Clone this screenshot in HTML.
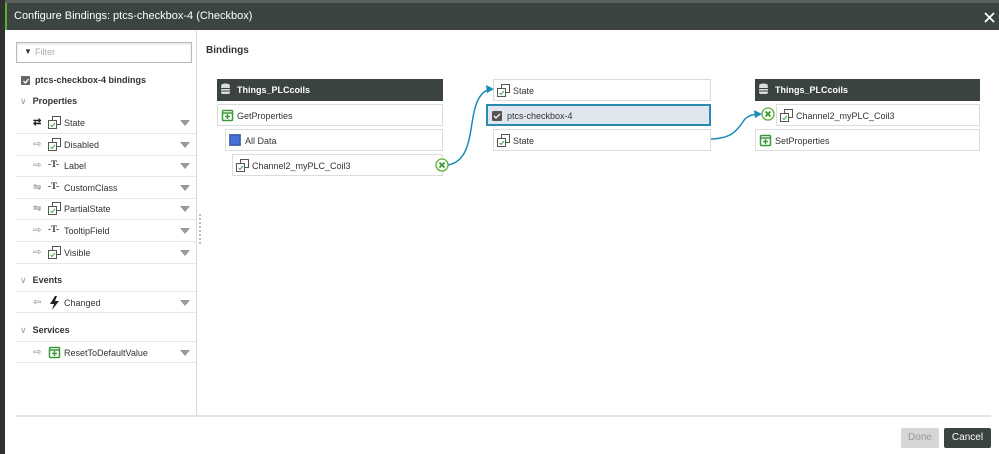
<!DOCTYPE html>
<html><head><meta charset="utf-8"><style>
*{box-sizing:border-box;margin:0;padding:0}
body{width:999px;height:454px;overflow:hidden;background:#fff;font-family:"Liberation Sans",Arial,sans-serif;font-size:9px;color:#333;position:relative}
.a{position:absolute}
.row{position:absolute;left:16px;width:180px;height:22px;border-bottom:1px solid #e6e6e6}
.row .t{position:absolute;left:48px;top:6px;font-size:9px;color:#333}
.row .arr{position:absolute;left:17px;top:5px;color:#888;font-size:10px}
.row .ic{position:absolute;left:32px;top:4px}
.row .dd{position:absolute;right:6px;top:8px;width:0;height:0;border-left:5px solid transparent;border-right:5px solid transparent;border-top:6px solid #999}
.sec{position:absolute;left:20px;font-size:9px;font-weight:bold;color:#333}
.sec span{color:#999;font-weight:normal;margin-right:6px}
.box{position:absolute;height:22px;border:1px solid #dcdcdc;background:#fff;font-size:9px;color:#333;padding:6px 0 0 19px;white-space:nowrap}
.hd{position:absolute;height:22px;background:#3b4342;color:#fff;font-weight:bold;font-size:9px;padding:6px 0 0 20px}
.box svg,.hd svg{position:absolute;left:3px;top:4px}
</style></head><body>
<div class="a" style="left:0;top:0;width:999px;height:3px;background:#5b605f"></div>
<div class="a" style="left:0;top:0;width:5px;height:454px;background:#2e3332"></div>
<div class="a" style="left:5px;top:3px;width:994px;height:27px;background:#3b4443;border-left:2px solid #5ab031"></div>
<div class="a" style="left:14px;top:10px;color:#fff;font-size:11px">Configure Bindings: ptcs-checkbox-4 (Checkbox)</div>
<svg class="a" style="left:984px;top:12px" width="11" height="11"><path d="M1 1L10 10M10 1L1 10" stroke="#fff" stroke-width="1.8"/></svg>

<div class="a" style="left:196px;top:30px;width:1px;height:386px;background:#d8d8d8"></div>
<div class="a" style="left:16px;top:42px;width:176px;height:21px;border:1px solid #bbb;box-shadow:inset 0 1px 2px #ddd"></div>
<div class="a" style="left:24px;top:47px;font-size:8px;font-weight:bold;color:#333">&#9660;</div>
<div class="a" style="left:35px;top:47px;color:#aaa;font-size:9px">Filter</div>
<div class="a" style="left:21px;top:76px;width:9px;height:9px;background:#666;border-radius:1px"></div>
<svg class="a" style="left:22px;top:77px" width="8" height="8"><path d="M1.5 4L3.5 6L6.5 2" stroke="#fff" stroke-width="1.3" fill="none"/></svg>
<div class="a" style="left:35px;top:75px;font-weight:bold;font-size:9px">ptcs-checkbox-4 bindings</div>
<div class="sec" style="top:96px"><span>&#8744;</span>Properties</div>

<div class="row" style="top:112px"><span class="arr" style="color:#222;font-weight:bold">&#8644;</span><svg class="ic" width="13" height="13"><rect x="4.5" y=".5" width="8" height="8" fill="#fff" stroke="#555"/><rect x=".5" y="4.5" width="8" height="8" fill="#fff" stroke="#555"/><path d="M2.5 9L4 10.5L7 7" stroke="#4a4" fill="none"/></svg><span class="t">State</span><span class="dd"></span></div>
<div class="row" style="top:134px"><span class="arr">&#8680;</span><svg class="ic" width="13" height="13"><rect x="4.5" y=".5" width="8" height="8" fill="#fff" stroke="#555"/><rect x=".5" y="4.5" width="8" height="8" fill="#fff" stroke="#555"/><path d="M2.5 9L4 10.5L7 7" stroke="#4a4" fill="none"/></svg><span class="t">Disabled</span><span class="dd"></span></div>
<div class="row" style="top:155px"><span class="arr">&#8680;</span><span class="ic" style="font-family:'Liberation Serif';font-weight:bold;color:#333;top:4px">-T-</span><span class="t">Label</span><span class="dd"></span></div>
<div class="row" style="top:177px"><span class="arr">&#8651;</span><span class="ic" style="font-family:'Liberation Serif';font-weight:bold;color:#333;top:4px">-T-</span><span class="t">CustomClass</span><span class="dd"></span></div>
<div class="row" style="top:198px"><span class="arr">&#8651;</span><svg class="ic" width="13" height="13"><rect x="4.5" y=".5" width="8" height="8" fill="#fff" stroke="#555"/><rect x=".5" y="4.5" width="8" height="8" fill="#fff" stroke="#555"/><path d="M2.5 9L4 10.5L7 7" stroke="#4a4" fill="none"/></svg><span class="t">PartialState</span><span class="dd"></span></div>
<div class="row" style="top:220px"><span class="arr">&#8680;</span><span class="ic" style="font-family:'Liberation Serif';font-weight:bold;color:#333;top:4px">-T-</span><span class="t">TooltipField</span><span class="dd"></span></div>
<div class="row" style="top:242px"><span class="arr">&#8680;</span><svg class="ic" width="13" height="13"><rect x="4.5" y=".5" width="8" height="8" fill="#fff" stroke="#555"/><rect x=".5" y="4.5" width="8" height="8" fill="#fff" stroke="#555"/><path d="M2.5 9L4 10.5L7 7" stroke="#4a4" fill="none"/></svg><span class="t">Visible</span><span class="dd"></span></div>
<div class="sec" style="top:275px"><span>&#8744;</span>Events</div>
<div class="row" style="top:291px;border-top:1px solid #e6e6e6"><span class="arr">&#8678;</span><svg class="ic" width="13" height="14"><path d="M7 0L2 8H6L4 14L11 5H7L9 0Z" fill="#222"/></svg><span class="t">Changed</span><span class="dd"></span></div>
<div class="sec" style="top:325px"><span>&#8744;</span>Services</div>
<div class="row" style="top:341px;border-top:1px solid #e6e6e6"><span class="arr">&#8680;</span><svg class="ic" width="13" height="13"><rect x="1.5" y="1.5" width="10" height="10" rx="1" fill="#fff" stroke="#3a9a3a" stroke-width="1.5"/><path d="M1 4H12M4 7.5H9M6.5 5V10" stroke="#3a9a3a" stroke-width="1.4"/></svg><span class="t">ResetToDefaultValue</span><span class="dd"></span></div>
<div class="a" style="left:199px;top:214px;width:2px;height:30px;border-left:2px dotted #bbb"></div>

<div class="a" style="left:206px;top:45px;font-weight:bold;font-size:10px;color:#333">Bindings</div>

<div class="hd" style="left:217px;top:79px;width:226px"><svg width="11" height="12"><ellipse cx="5.5" cy="2.5" rx="4.5" ry="2" fill="#ddd"/><rect x="1" y="3" width="9" height="8" rx="2" fill="#ddd"/><path d="M1 5.5H10M1 8H10" stroke="#3b4342"/></svg>Things_PLCcoils</div>
<div class="box" style="left:217px;top:104px;width:226px"><svg width="13" height="13"><rect x="1.5" y="1.5" width="10" height="10" rx="1" fill="#fff" stroke="#3a9a3a" stroke-width="1.5"/><path d="M1 4H12M4 7.5H9M6.5 5V10" stroke="#3a9a3a" stroke-width="1.4"/></svg>GetProperties</div>
<div class="box" style="left:225px;top:129px;width:218px;padding-left:19px"><svg width="12" height="12"><rect x=".5" y=".5" width="11" height="11" fill="#3a5fc8" stroke="#5577aa"/><rect x="2" y="2" width="8" height="8" fill="#4a6fd8"/></svg>All Data</div>
<div class="box" style="left:232px;top:154px;width:211px"><svg width="13" height="13"><rect x="4.5" y=".5" width="8" height="8" fill="#fff" stroke="#555"/><rect x=".5" y="4.5" width="8" height="8" fill="#fff" stroke="#555"/><path d="M2.5 9L4 10.5L7 7" stroke="#4a4" fill="none"/></svg>Channel2_myPLC_Coil3</div>

<div class="box" style="left:493px;top:79px;width:218px"><svg width="13" height="13"><rect x="4.5" y=".5" width="8" height="8" fill="#fff" stroke="#555"/><rect x=".5" y="4.5" width="8" height="8" fill="#fff" stroke="#555"/><path d="M2.5 9L4 10.5L7 7" stroke="#4a4" fill="none"/></svg>State</div>
<div class="box" style="left:486px;top:104px;width:225px;background:#dfe6ed;border:2px solid #2a8ab0;padding-left:19px;padding-top:5px"><svg width="10" height="10" style="left:4px;top:5px"><rect width="10" height="10" rx="1" fill="#555"/><path d="M2 5L4 7L8 3" stroke="#fff" stroke-width="1.3" fill="none"/></svg>ptcs-checkbox-4</div>
<div class="box" style="left:493px;top:129px;width:218px"><svg width="13" height="13"><rect x="4.5" y=".5" width="8" height="8" fill="#fff" stroke="#555"/><rect x=".5" y="4.5" width="8" height="8" fill="#fff" stroke="#555"/><path d="M2.5 9L4 10.5L7 7" stroke="#4a4" fill="none"/></svg>State</div>

<div class="hd" style="left:755px;top:79px;width:225px"><svg width="11" height="12"><ellipse cx="5.5" cy="2.5" rx="4.5" ry="2" fill="#ddd"/><rect x="1" y="3" width="9" height="8" rx="2" fill="#ddd"/><path d="M1 5.5H10M1 8H10" stroke="#3b4342"/></svg>Things_PLCcoils</div>
<div class="box" style="left:776px;top:104px;width:204px"><svg width="13" height="13"><rect x="4.5" y=".5" width="8" height="8" fill="#fff" stroke="#555"/><rect x=".5" y="4.5" width="8" height="8" fill="#fff" stroke="#555"/><path d="M2.5 9L4 10.5L7 7" stroke="#4a4" fill="none"/></svg>Channel2_myPLC_Coil3</div>
<div class="box" style="left:755px;top:129px;width:225px;padding-left:19px"><svg width="13" height="13"><rect x="1.5" y="1.5" width="10" height="10" rx="1" fill="#fff" stroke="#3a9a3a" stroke-width="1.5"/><path d="M1 4H12M4 7.5H9M6.5 5V10" stroke="#3a9a3a" stroke-width="1.4"/></svg>SetProperties</div>

<svg class="a" style="left:0;top:0" width="999" height="454">
<path d="M448 165C475 160 468 120 478 100C482 92 486 90 492 89" stroke="#1a8cb8" stroke-width="1.5" fill="none"/>
<path d="M486 85L494 89L487 93Z" fill="#1a8cb8"/>
<path d="M711 139C735 138 738 128 745 119C749 115 754 114 760 114" stroke="#1a8cb8" stroke-width="1.5" fill="none"/>
<path d="M754 110L762 114L755 118Z" fill="#1a8cb8"/>
<circle cx="442" cy="165" r="6" fill="#fff" stroke="#5ab031" stroke-width="1.3"/>
<path d="M439.5 162.5L444.5 167.5M444.5 162.5L439.5 167.5" stroke="#3a9a2a" stroke-width="1.8"/>
<circle cx="768" cy="114" r="6" fill="#fff" stroke="#5ab031" stroke-width="1.3"/>
<path d="M765.5 111.5L770.5 116.5M770.5 111.5L765.5 116.5" stroke="#3a9a2a" stroke-width="1.8"/>
</svg>

<div class="a" style="left:16px;top:415px;width:975px;height:2px;background:#e3e3e3"></div>
<div class="a" style="left:901px;top:428px;width:38px;height:20px;background:#d6d6d6;border-radius:2px;color:#999;font-size:10px;text-align:center;line-height:20px">Done</div>
<div class="a" style="left:944px;top:428px;width:47px;height:20px;background:#3b4342;border-radius:2px;color:#fff;font-size:10px;text-align:center;line-height:20px">Cancel</div>
</body></html>
